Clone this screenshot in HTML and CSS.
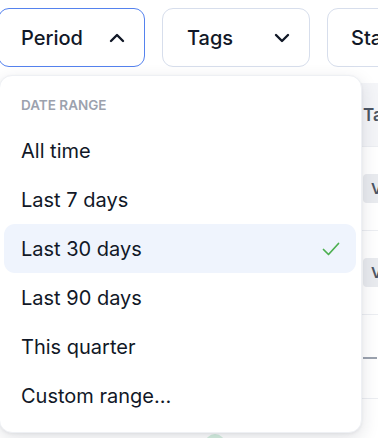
FILE: index.html
```html
<!DOCTYPE html>
<html>
    <head>
        <meta charset="UTF-8">
        <title>Filters</title>
        <link rel="stylesheet" href="styles.css">
    </head>
    <body>
        <div class="page">
            <div class="toolbar">
                <button class="filter filter-period open">Period
                    <svg class="chev" width="16" height="10" viewBox="0 0 16 10"><polyline points="2,8 8,2 14,8"/></svg>
                </button>
                <button class="filter filter-tags">Tags
                    <svg class="chev" width="16" height="10" viewBox="0 0 16 10"><polyline points="2,2 8,8 14,2"/></svg>
                </button>
                <button class="filter filter-status">Status</button>
            </div>

            <div class="grid">
                <div class="row head">
                    <div class="cell"></div>
                    <div class="cell">Tags</div>
                </div>
                <div class="row">
                    <div class="cell"></div>
                    <div class="cell"><span class="badge">VIP</span></div>
                </div>
                <div class="row">
                    <div class="cell"></div>
                    <div class="cell"><span class="badge">VIP</span></div>
                </div>
                <div class="row">
                    <div class="cell"></div>
                    <div class="cell"><span class="dash"></span></div>
                </div>
                <div class="row last">
                    <div class="cell"><span class="dot"></span></div>
                    <div class="cell"></div>
                </div>
            </div>

            <div class="menu">
                <div class="menu-title">DATE RANGE</div>
                <div class="item">All time</div>
                <div class="item">Last 7 days</div>
                <div class="item selected">Last 30 days
                    <svg class="check" width="18" height="14" viewBox="0 0 18 14"><polyline points="1.5,7.5 6.5,12.5 16.5,1.5"/></svg>
                </div>
                <div class="item">Last 90 days</div>
                <div class="item">This quarter</div>
                <div class="item">Custom range…</div>
            </div>
        </div>
    </body>
</html>
```

FILE: styles.css
```css
body {
    margin: 0;
    background: #fff;
    font-family: Inter, "Noto Sans", sans-serif;
    color: #111827;
    overflow: hidden;
}

.page {
    position: relative;
    height: 438px;
    overflow: hidden;
}

.toolbar {
    display: flex;
    gap: 17px;
    padding-top: 8px;
    margin-left: -2px;
}

.filter {
    flex: none;
    height: 59px;
    box-sizing: border-box;
    display: flex;
    align-items: center;
    justify-content: space-between;
    padding: 0 19px 0 22px;
    background: #fff;
    border: 1px solid #d7deec;
    border-radius: 11px;
    font-family: inherit;
    font-size: 20px;
    font-weight: 500;
    color: #111827;
}

.filter.open {
    border-color: #5582ee;
}

.filter-period {
    width: 147px;
}

.filter-tags {
    width: 148px;
    padding-left: 24px;
}

.filter-status {
    width: 140px;
    padding-left: 23px;
}

.chev {
    fill: none;
    stroke: #111827;
    stroke-width: 2.4;
    stroke-linecap: round;
    stroke-linejoin: round;
}

.grid {
    margin-top: 16px;
}

.row {
    display: grid;
    grid-template-columns: 362px 1fr;
    height: 83px;
    border-bottom: 1px solid #eceef2;
    font-size: 16px;
    color: #374151;
}

.row.head {
    height: 63px;
    background: #f4f5f8;
    font-weight: 600;
    font-size: 17px;
    color: #4b5563;
}

.row.last {
    border-bottom: none;
    align-items: start;
}

.cell {
    display: flex;
    align-items: center;
    padding-left: 1px;
}

.row.last .cell {
    align-items: flex-start;
    padding: 35px 0 0 205px;
}

.badge {
    display: inline-block;
    padding: 5px 8px;
    background: #e9ebef;
    border-radius: 4px;
    font-size: 15px;
    font-weight: 600;
    color: #4b5563;
}

.dash {
    display: inline-block;
    width: 14px;
    height: 2px;
    margin-top: 2px;
    background: #9ca3af;
}

.dot {
    display: inline-block;
    width: 20px;
    height: 20px;
    border-radius: 50%;
    background: #d5efe0;
}

.menu {
    position: absolute;
    top: 75px;
    left: -1px;
    width: 363px;
    box-sizing: border-box;
    padding: 5px 5px 12px 4px;
    background: #fff;
    border: 1px solid #eef0f4;
    border-radius: 13px;
    box-shadow: 0 6px 18px rgba(30, 41, 59, 0.13), 0 1px 3px rgba(30, 41, 59, 0.06);
}

.menu-title {
    padding: 16px 0 0 17px;
    height: 29px;
    line-height: 16px;
    font-size: 13.5px;
    font-weight: 600;
    color: #9ca2ae;
}

.item {
    display: flex;
    align-items: center;
    justify-content: space-between;
    height: 49px;
    padding: 0 16px 0 17px;
    border-radius: 11px;
    font-size: 20px;
    color: #111827;
}

.item.selected {
    background: #eff4fd;
}

.check {
    fill: none;
    stroke: #4caf50;
    stroke-width: 1.7;
    stroke-linecap: round;
    stroke-linejoin: round;
}
```
